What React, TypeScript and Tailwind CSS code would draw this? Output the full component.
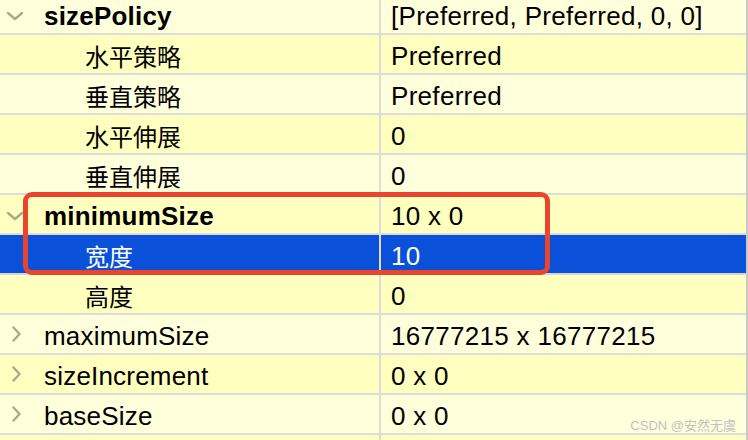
import React from "react";

type Row = {
  key: string;
  value: string;
  level: 0 | 1;
  bold?: boolean;
  arrow?: "down" | "right";
  cjk?: boolean;
  selected?: boolean;
};

const rows: Row[] = [
  { key: "sizePolicy", value: "[Preferred, Preferred, 0, 0]", level: 0, bold: true, arrow: "down" },
  { key: "水平策略", value: "Preferred", level: 1, cjk: true },
  { key: "垂直策略", value: "Preferred", level: 1, cjk: true },
  { key: "水平伸展", value: "0", level: 1, cjk: true },
  { key: "垂直伸展", value: "0", level: 1, cjk: true },
  { key: "minimumSize", value: "10 x 0", level: 0, bold: true, arrow: "down" },
  { key: "宽度", value: "10", level: 1, cjk: true, selected: true },
  { key: "高度", value: "0", level: 1, cjk: true },
  { key: "maximumSize", value: "16777215 x 16777215", level: 0, arrow: "right" },
  { key: "sizeIncrement", value: "0 x 0", level: 0, arrow: "right" },
  { key: "baseSize", value: "0 x 0", level: 0, arrow: "right" },
  { key: "", value: "", level: 0 },
];

function Chevron({ dir }: { dir: "down" | "right" }) {
  if (dir === "down") {
    return (
      <svg width="18" height="10" viewBox="0 0 18 10" className="absolute left-[6px] top-1/2 -translate-y-1/2 mt-[2px]">
        <path d="M2 2 L9 8 L16 2" fill="none" stroke="#a9a98f" strokeWidth="2.4" strokeLinecap="round" strokeLinejoin="round" />
      </svg>
    );
  }
  return (
    <svg width="11" height="18" viewBox="0 0 11 18" className="absolute left-[11px] top-1/2 -translate-y-1/2">
      <path d="M2.5 2.5 L8.5 9 L2.5 15.5" fill="none" stroke="#a9a98f" strokeWidth="2.4" strokeLinecap="round" strokeLinejoin="round" />
    </svg>
  );
}

export default function App() {
  return (
    <div
      className="relative w-[748px] h-[440px] overflow-hidden bg-[#ffffdc] border-r-2 border-[#c9c9c9]"
      style={{ fontFamily: '"Liberation Sans", "Noto Sans CJK SC", sans-serif' }}
    >
      <div className="-mt-[5px] flex flex-col">
        {rows.map((r, i) => {
          const bg = r.selected ? "bg-[#0b50d9]" : i % 2 === 0 ? "bg-[#ffffdc]" : "bg-[#ffffbf]";
          const text = r.selected ? "text-white" : "text-black";
          return (
            <div key={i} className={`flex h-[40px] border-b-2 ${r.selected ? "border-[#d6d6d6]" : "border-[#dcdcdc]"} ${bg} ${text}`}>
              <div className="relative w-[381px] shrink-0 border-r-2 border-[#dcdcdc] flex items-center pt-[4px]">
                {r.arrow && <Chevron dir={r.arrow} />}
                <span
                  className={`${r.level === 0 ? "pl-[44px]" : "pl-[85px]"} ${r.bold ? "font-bold" : ""} ${
                    r.cjk ? "text-[24px]" : "text-[26px] tracking-[0.2px]"
                  } leading-none`}
                  style={r.cjk ? { fontFamily: '"Noto Sans CJK SC", sans-serif' } : undefined}
                >
                  {r.key}
                </span>
              </div>
              <div className="flex-1 flex items-center pl-[10px] pt-[4px] text-[26px] tracking-[0.3px] leading-none">{r.value}</div>
            </div>
          );
        })}
      </div>
      <div className="absolute left-[23px] top-[192px] w-[527px] h-[83px] rounded-[9px] border-[5px] border-[#e8442e]" />
      <div
        className="absolute right-[10px] top-[419px] whitespace-nowrap text-[13px] leading-none text-[#c2c2c2]"
        style={{ fontFamily: '"Liberation Sans", "Noto Sans CJK SC", sans-serif' }}
      >
        CSDN @安然无虞
      </div>
    </div>
  );
}
